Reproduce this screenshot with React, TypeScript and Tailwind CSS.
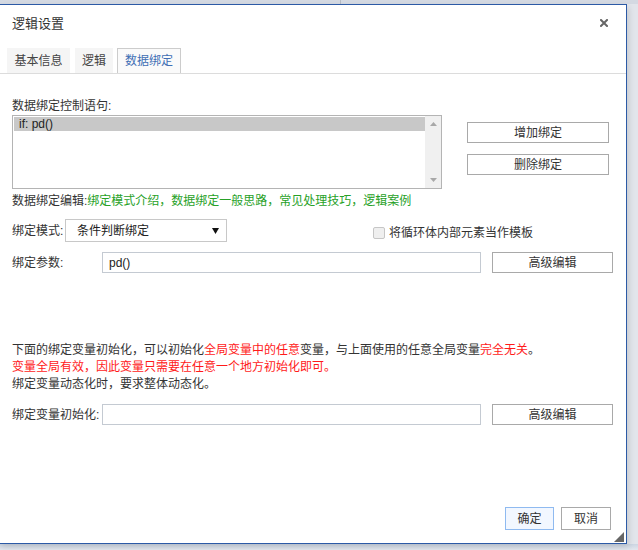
import React from "react";

function Btn({ children, className = "" }: { children: React.ReactNode; className?: string }) {
  return (
    <div
      className={
        "flex items-center justify-center border border-[#a9a9a9] bg-white text-[12px] text-[#333] " +
        className
      }
    >
      {children}
    </div>
  );
}

export default function App() {
  return (
    <div className="w-[638px] h-[550px] overflow-hidden bg-[#e2e5eb] flex flex-col font-['Liberation_Sans','Noto_Sans_CJK_SC',sans-serif] text-[12px] text-[#333]">
      <div className="h-[4px] shrink-0 bg-[#d4d9e2] flex">
        <div className="w-[341px] border-r border-[#b7bcc5]" />
      </div>
      <div className="flex">
        <div className="-ml-px w-[628px] h-[540px] border border-[#2c5aa6] bg-white shadow-[2px_3px_6px_rgba(0,0,0,0.12)] flex flex-col relative">
          {/* header */}
          <div className="h-[43px] shrink-0 flex justify-between">
            <div className="pl-[12px] pt-[10px] text-[13px] leading-[17px] text-[#333]">逻辑设置</div>
            <div className="pr-[18px] pt-[14px]">
              <svg width="8" height="8" viewBox="0 0 8 8">
                <path d="M1 1L7 7M7 1L1 7" stroke="#666" strokeWidth="2" strokeLinecap="square" />
              </svg>
            </div>
          </div>
          {/* tabs */}
          <div className="h-[26px] shrink-0 flex px-[7px] border-b border-[#dcdcdc]">
            <div className="w-[63px] h-[25px] flex items-center justify-center bg-[#f5f5f5] text-[#444]">基本信息</div>
            <div className="ml-[5px] w-[38px] h-[25px] flex items-center justify-center bg-[#f5f5f5] text-[#444]">逻辑</div>
            <div className="ml-[4px] w-[64px] h-[25px] flex items-center justify-center bg-[#fafafa] border border-b-0 border-[#cccccc] text-[#3f6fb5]">数据绑定</div>
          </div>
          {/* content */}
          <div className="flex flex-col px-[12px] pt-[24px] flex-1">
            <div className="flex">
              <div className="flex flex-col w-[430px]">
                <div className="leading-[17px]">数据绑定控制语句:</div>
                <div className="h-[74px] border border-[#b4b4b4] flex">
                  <div className="flex-1 pl-[1px] pt-[1px]">
                    <div className="h-[14px] bg-[#c8c8c8] pl-[5px] leading-[14px] text-[12px] text-[#222]">if: pd()</div>
                  </div>
                  <div className="w-[16px] bg-[#f0f0f0] flex flex-col justify-between items-center py-[6px]">
                    <svg width="7" height="4" viewBox="0 0 7 4">
                      <path d="M0 4L3.5 0L7 4Z" fill="#a8a8a8" />
                    </svg>
                    <svg width="7" height="4" viewBox="0 0 7 4">
                      <path d="M0 0L3.5 4L7 0Z" fill="#a8a8a8" />
                    </svg>
                  </div>
                </div>
              </div>
              <div className="ml-[25px] mt-[24px] flex flex-col gap-[11px]">
                <Btn className="w-[142px] h-[21px]">增加绑定</Btn>
                <Btn className="w-[142px] h-[21px]">删除绑定</Btn>
              </div>
            </div>
            <div className="mt-[4px] leading-[17px]">
              数据绑定编辑:
              <span className="text-[#27a127]">绑定模式介绍，数据绑定一般思路，常见处理技巧，逻辑案例</span>
            </div>
            <div className="mt-[9px] flex h-[23px]">
              <div className="w-[53px] flex items-center">绑定模式:</div>
              <div className="w-[162px] h-[23px] border border-[#c8c8c8] flex items-center justify-between pl-[11px] pr-[7px] text-[#222]">
                <span>条件判断绑定</span>
                <svg width="7" height="6" viewBox="0 0 7 6">
                  <path d="M0 0L7 0L3.5 6Z" fill="#111" />
                </svg>
              </div>
              <div className="ml-[146px] mt-[8px] flex items-center h-[12px]">
                <div className="w-[12px] h-[12px] border border-[#c6c6c6] bg-[#efefef] rounded-[2px]" />
                <span className="ml-[4px] leading-[12px] text-[#333]">将循环体内部元素当作模板</span>
              </div>
            </div>
            <div className="mt-[10px] flex h-[21px]">
              <div className="w-[90px] flex items-center">绑定参数:</div>
              <div className="w-[379px] h-[21px] border border-[#c4cad2] flex items-center pl-[6px] text-[#222]">pd()</div>
              <Btn className="ml-[11px] w-[121px] h-[21px]">高级编辑</Btn>
            </div>
            <div className="mt-[69px] flex flex-col leading-[17px]">
              <div>
                下面的绑定变量初始化，可以初始化<span className="text-[#ff1a1a]">全局变量中的任意</span>变量，与上面使用的任意全局变量<span className="text-[#ff1a1a]">完全无关</span>。
              </div>
              <div className="text-[#ff1a1a]">变量全局有效，因此变量只需要在任意一个地方初始化即可。</div>
              <div>绑定变量动态化时，要求整体动态化。</div>
            </div>
            <div className="mt-[11px] flex h-[21px]">
              <div className="w-[90px] flex items-center">绑定变量初始化:</div>
              <div className="w-[379px] h-[21px] border border-[#c4cad2]" />
              <Btn className="ml-[11px] w-[121px] h-[21px]">高级编辑</Btn>
            </div>
            <div className="mt-auto flex justify-end pb-[13px] pr-[3px] gap-[7px]">
              <div className="w-[49px] h-[23px] flex items-center justify-center border border-[#8fbaf0] bg-[#f2f7ff] text-[#333]">确定</div>
              <Btn className="w-[50px] h-[23px]">取消</Btn>
            </div>
          </div>
          <div className="absolute right-[2px] bottom-[1px]">
            <svg width="10" height="10" viewBox="0 0 10 10">
              <path d="M10 0L10 10L0 10Z" fill="#666" />
            </svg>
          </div>
        </div>
      </div>
      <div className="flex-1 bg-[linear-gradient(#ccd5e2,#e3e7ee)]" />
    </div>
  );
}
